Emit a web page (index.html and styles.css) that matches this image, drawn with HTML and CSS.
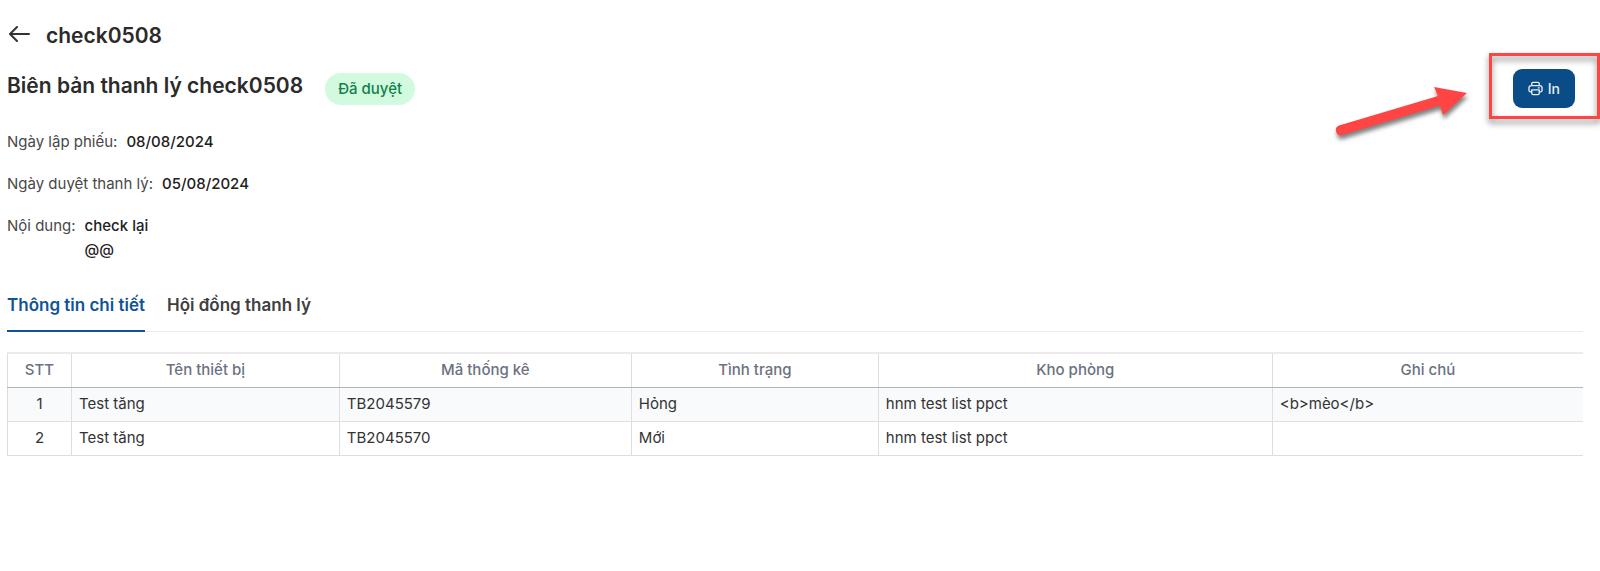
FILE: index.html
```html
<!DOCTYPE html>
<html lang="vi">
<head>
    <meta charset="UTF-8">
    <meta name="viewport" content="width=device-width, initial-scale=1.0">
    <title>Biên bản thanh lý</title>
    <link rel="stylesheet" href="styles.css">
</head>
<body>

    <!-- Page title with back button -->
    <header class="page-header">
        <button type="button" class="back-button" aria-label="Quay lại">
            <svg width="22" height="16" viewBox="0 0 22 16" fill="none" stroke="currentColor" stroke-width="2" stroke-linecap="round" stroke-linejoin="round">
                <path d="M20 8H2M8 1L1 8l7 7"/>
            </svg>
        </button>
        <h1>check0508</h1>
    </header>

    <main>
        <div class="title-row">
            <h2>Biên bản thanh lý check0508</h2>
            <span class="badge">Đã duyệt</span>
            <div class="print-box">
                <svg class="arrow" width="144" height="56" viewBox="0 0 144 56" fill="#ff4444">
                    <path d="M10 39.500L109 10L105 1L138 7L114 29L111 19.500L13 49a5 5 0 0 1-3-9.500z"/>
                </svg>
                <button type="button" class="print-button">
                    <svg width="15" height="15" viewBox="0 0 16 16" fill="none" stroke="currentColor" stroke-width="1.400" stroke-linejoin="round">
                        <path d="M4 5V3q0-1.500 1.500-1.500h5Q12 1.500 12 3v2M4 11.500H3Q1 11.500 1 9.500V7.500Q1 5 3.500 5h9q2.500 0 2.500 2.500v2q0 2-2 2h-1M4 9.500h8v3.500q0 1.500-1.500 1.500h-5Q4 14.500 4 13zM10.500 7.300h2"/>
                    </svg>
                    In
                </button>
            </div>
        </div>

        <dl class="info">
            <div class="info-row">
                <dt>Ngày lập phiếu:</dt>
                <dd>08/08/2024</dd>
            </div>
            <div class="info-row">
                <dt>Ngày duyệt thanh lý:</dt>
                <dd>05/08/2024</dd>
            </div>
            <div class="info-row">
                <dt>Nội dung:</dt>
                <dd>check lại<br>@@</dd>
            </div>
        </dl>

        <!-- Tabs -->
        <div class="tabs" role="tablist">
            <button type="button" class="tab active" role="tab" aria-selected="true">Thông tin chi tiết</button>
            <button type="button" class="tab" role="tab" aria-selected="false">Hội đồng thanh lý</button>
        </div>

        <table class="device-table">
            <colgroup>
                <col class="col-index">
                <col class="col-name">
                <col class="col-code">
                <col class="col-status">
                <col class="col-room">
                <col>
            </colgroup>
            <thead>
                <tr>
                    <th>STT</th>
                    <th>Tên thiết bị</th>
                    <th>Mã thống kê</th>
                    <th>Tình trạng</th>
                    <th>Kho phòng</th>
                    <th>Ghi chú</th>
                </tr>
            </thead>
            <tbody>
                <tr>
                    <td>1</td>
                    <td>Test tăng</td>
                    <td>TB2045579</td>
                    <td>Hỏng</td>
                    <td>hnm test list ppct</td>
                    <td>&lt;b&gt;mèo&lt;/b&gt;</td>
                </tr>
                <tr>
                    <td>2</td>
                    <td>Test tăng</td>
                    <td>TB2045570</td>
                    <td>Mới</td>
                    <td>hnm test list ppct</td>
                    <td></td>
                </tr>
            </tbody>
        </table>
    </main>

</body>
</html>
```
FILE: styles.css
```css
/* Basic Styles */
* {
    box-sizing: border-box;
}

body {
    font-family: 'Inter', sans-serif;
    font-size: 15px;
    line-height: 24px;
    color: #333;
    background-color: #fff;
    margin: 0;
    padding: 20px 17px 20px 7px;
}

button {
    font-family: inherit;
    cursor: pointer;
}

h1,
h2 {
    margin: 0;
    font-size: 21px;
    font-weight: 600;
    line-height: 32px;
    color: #2b2b2b;
}

.page-header {
    display: flex;
    align-items: center;
    gap: 15px;
}

.back-button {
    display: flex;
    padding: 0 0 4px 2px;
    border: none;
    background: none;
    color: #333;
}

/* Title, status and print button */
.title-row {
    display: flex;
    align-items: center;
    padding: 17px 8px 0 0;
}

.title-row h2 {
    padding-bottom: 6px;
}

.badge {
    margin-left: 22px;
    padding: 4px 13px;
    border-radius: 16px;
    background-color: #d1fadf;
    color: #12804a;
    font-weight: 500;
}

.print-box {
    position: relative;
    margin-left: auto;
}

/* Red frame around the button */
.print-box::after {
    content: "";
    position: absolute;
    inset: -16px -25px -11px -24px;
    border: 3px solid #ff4444;
    filter: drop-shadow(0 4px 3px rgba(0, 0, 0, 0.5));
    pointer-events: none;
}

.arrow {
    position: absolute;
    top: 17px;
    right: 102px;
    filter: drop-shadow(1px 4px 2px rgba(0, 0, 0, 0.5));
}

.print-button {
    display: flex;
    align-items: center;
    gap: 5px;
    height: 39px;
    padding: 0 15px;
    border: none;
    border-radius: 9px;
    background-color: #094c88;
    color: #e8eef5;
    font-size: 14px;
    font-weight: 500;
}

/* Record details */
.info {
    margin: 22px 0 0;
}

.info-row {
    display: flex;
    gap: 9px;
    margin-bottom: 18px;
}

dt {
    color: #484848;
}

dd {
    margin: 0;
    font-weight: 500;
    color: #212121;
}

/* Tabs */
.tabs {
    display: flex;
    gap: 22px;
    margin-top: 21px;
    border-bottom: 1px solid #ebebeb;
}

.tab {
    margin-bottom: -1px;
    padding: 8px 0 11px;
    border: none;
    border-bottom: 2px solid transparent;
    background: none;
    font-size: 17px;
    font-weight: 600;
    line-height: 28px;
    color: #404040;
}

.tab.active {
    border-bottom-color: #0f5496;
    color: #0f5496;
}

/* Device table */
.device-table {
    width: 100%;
    margin-top: 20px;
    border-collapse: collapse;
    table-layout: fixed;
    border-top: 2px solid #ebebeb;
}

.device-table th,
.device-table td {
    height: 34px;
    padding: 0 7px;
    border-left: 1px solid #dedede;
    border-bottom: 1px solid #dedede;
    text-align: left;
}

.device-table th {
    border-bottom-color: #b0b3b8;
    color: #6b7280;
    font-weight: 500;
    text-align: center;
}

.device-table tbody tr:nth-child(odd) {
    background-color: #f9fafb;
}

.device-table td:first-child {
    text-align: center;
}

.col-index {
    width: 64px;
}

.col-name {
    width: 17%;
}

.col-code {
    width: 292px;
}

.col-status {
    width: 247px;
}

.col-room {
    width: 25%;
}
```
